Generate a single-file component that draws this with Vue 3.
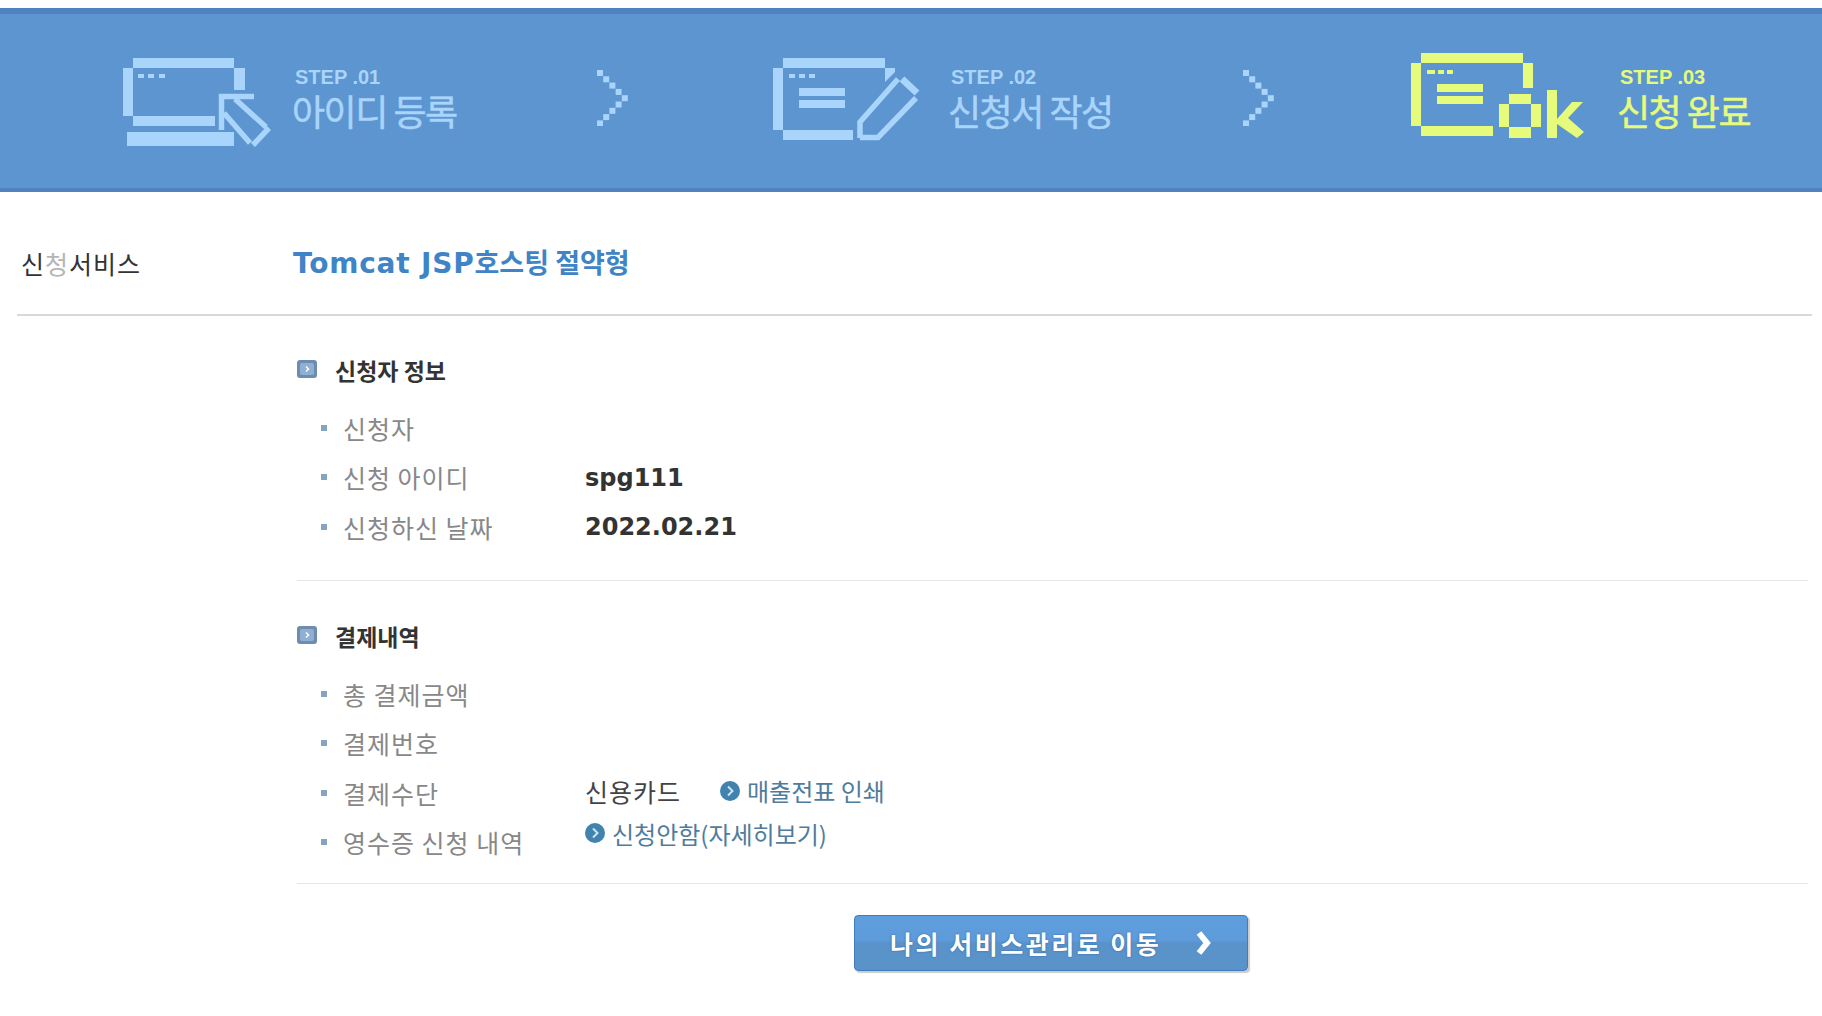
<script setup>
const chevron = Array.from({ length: 9 }, (_, n) => ({
  x: (4 - Math.abs(n - 4)) * 6.2,
  y: n * 6.3,
}))

const applicant = [
  { label: '신청자' },
  { label: '신청 아이디', value: 'spg111' },
  { label: '신청하신 날짜', value: '2022.02.21' },
]
</script>

<template>
  <div class="page">
    <div class="banner">
      <div class="step">
        <svg class="icon icon-one" width="150" height="90" viewBox="0 0 150 90">
          <g fill="#a9d4fb">
            <rect x="10" y="0" width="101" height="10" />
            <rect x="0" y="10" width="10" height="48" />
            <rect x="111" y="10" width="11" height="22" />
            <rect x="10" y="58" width="82" height="10" />
            <rect x="4" y="74" width="107" height="14" />
            <rect x="15" y="16" width="6" height="4" />
            <rect x="25" y="16" width="6" height="4" />
            <rect x="36" y="16" width="6" height="4" />
          </g>
          <path d="M98.500 72V38.500H131M112 41l31 28M101 55l26 30M146 70l-16 17" fill="none" stroke="#a9d4fb" stroke-width="5.500" />
        </svg>
        <div class="step-text text-one">
          <div class="step-no">STEP .01</div>
          <div class="step-name">아이디 등록</div>
        </div>
      </div>
      <svg class="chevron" width="32" height="56" viewBox="0 0 32 56">
        <rect v-for="(p, i) in chevron" :key="i" :x="p.x" :y="p.y" width="6" height="6" fill="#a9d4fb" />
      </svg>
      <div class="step">
        <svg class="icon icon-two" width="150" height="90" viewBox="0 0 150 90">
          <g fill="#a9d4fb">
            <rect x="10" y="0" width="102" height="10" />
            <rect x="0" y="10" width="10" height="62" />
            <polygon points="112,10 122,10 122,14 112,24" />
            <rect x="10" y="72" width="70" height="10" />
            <rect x="16" y="16" width="6" height="4" />
            <rect x="26" y="16" width="6" height="4" />
            <rect x="36" y="16" width="6" height="4" />
            <rect x="26" y="30" width="46" height="8" />
            <rect x="26" y="42" width="46" height="8" />
          </g>
          <path d="M87 80V64l38-43M143 40l-38 39.500H87" fill="none" stroke="#a9d4fb" stroke-width="5.500" />
          <path d="M129 21l15 14" stroke="#a9d4fb" stroke-width="7" />
        </svg>
        <div class="step-text text-two">
          <div class="step-no">STEP .02</div>
          <div class="step-name">신청서 작성</div>
        </div>
      </div>
      <svg class="chevron" width="32" height="56" viewBox="0 0 32 56">
        <rect v-for="(p, i) in chevron" :key="i" :x="p.x" :y="p.y" width="6" height="6" fill="#a9d4fb" />
      </svg>
      <div class="step step-done">
        <svg class="icon icon-three" width="175" height="88" viewBox="0 0 175 88">
          <g fill="#e6fb7c">
            <rect x="10" y="0" width="102" height="10" />
            <rect x="0" y="10" width="10" height="63" />
            <rect x="112" y="10" width="10" height="25" />
            <rect x="10" y="73" width="72" height="10" />
            <rect x="16" y="17" width="8" height="4" />
            <rect x="27" y="17" width="6" height="4" />
            <rect x="36" y="17" width="6" height="4" />
            <rect x="26" y="31" width="46" height="8" />
            <rect x="26" y="43" width="46" height="8" />
            <rect x="98" y="41" width="22" height="10" />
            <rect x="88" y="51" width="10" height="23" />
            <rect x="120" y="51" width="10" height="23" />
            <rect x="98" y="74" width="22" height="11" />
            <rect x="136" y="37" width="10" height="48" />
            <polygon points="146,66 161,49 172,49 157,65 173,79 166,85 146,71" />
          </g>
        </svg>
        <div class="step-text text-three">
          <div class="step-no">STEP .03</div>
          <div class="step-name">신청 완료</div>
        </div>
      </div>
    </div>

    <div class="content">
      <div class="service">
        <div class="service-label">신<span class="faded">청</span>서비스</div>
        <div class="service-name">Tomcat JSP<span class="service-kr">호스팅 절약형</span></div>
      </div>

      <div class="section">
        <div class="section-head">
          <svg class="head-icon" width="20" height="18" viewBox="0 0 20 18">
            <rect width="20" height="18" rx="3" fill="#6c8cb0" />
            <rect x="3" y="3" width="14" height="12" rx="2" fill="#8fb0d2" />
            <path d="M9 6.500l2.500 2.500L9 11.500" fill="none" stroke="#fff" stroke-width="1.500" />
          </svg>
          <span>신청자 정보</span>
        </div>
        <div v-for="row in applicant" :key="row.label" class="row">
          <i class="bullet"></i>
          <span class="label">{{ row.label }}</span>
          <b v-if="row.value" class="value">{{ row.value }}</b>
        </div>
      </div>

      <div class="section section-last">
        <div class="section-head">
          <svg class="head-icon" width="20" height="18" viewBox="0 0 20 18">
            <rect width="20" height="18" rx="3" fill="#6c8cb0" />
            <rect x="3" y="3" width="14" height="12" rx="2" fill="#8fb0d2" />
            <path d="M9 6.500l2.500 2.500L9 11.500" fill="none" stroke="#fff" stroke-width="1.500" />
          </svg>
          <span>결제내역</span>
        </div>
        <div class="row">
          <i class="bullet"></i>
          <span class="label">총 결제금액</span>
        </div>
        <div class="row">
          <i class="bullet"></i>
          <span class="label">결제번호</span>
        </div>
        <div class="row">
          <i class="bullet"></i>
          <span class="label">결제수단</span>
          <span class="pay">신용카드</span>
          <a class="link link-print">
            <svg width="20" height="20" viewBox="0 0 20 20">
              <circle cx="10" cy="10" r="10" fill="#3f83ae" />
              <path d="M8 5.500l4.500 4.500L8 14.500" fill="none" stroke="#cfe3f0" stroke-width="2" />
            </svg>
            매출전표 인쇄
          </a>
        </div>
        <div class="row">
          <i class="bullet"></i>
          <span class="label">영수증 신청 내역</span>
          <a class="link link-receipt">
            <svg width="20" height="20" viewBox="0 0 20 20">
              <circle cx="10" cy="10" r="10" fill="#3f83ae" />
              <path d="M8 5.500l4.500 4.500L8 14.500" fill="none" stroke="#cfe3f0" stroke-width="2" />
            </svg>
            신청안함(자세히보기)
          </a>
        </div>
      </div>

      <div class="actions">
        <button class="move-button">
          <span>나의 서비스관리로 이동</span>
          <svg width="16" height="26" viewBox="0 0 16 26">
            <path d="M3 3l8 10-8 10" fill="none" stroke="#fff" stroke-width="6" />
          </svg>
        </button>
      </div>
    </div>
  </div>
</template>

<style scoped>
.page {
  width: 1822px;
  height: 1016px;
  overflow: hidden;
  background: #fff;
  padding-top: 8px;
  box-sizing: border-box;
  font-family: "Noto Sans CJK KR", "Liberation Sans", sans-serif;
}

.banner {
  height: 184px;
  box-sizing: border-box;
  padding-left: 123px;
  background: #5c95cf;
  border-top: 6px solid #4f82bf;
  border-bottom: 4px solid #4f82bf;
  display: grid;
  grid-template-columns: 474px 176px 470px 168px 1fr;
}

.step {
  display: flex;
  align-items: flex-start;
}

.icon {
  flex: none;
  margin-top: 44px;
}

.icon-three {
  margin-top: 39px;
}

.step-text {
  margin-top: 53px;
  color: #a9d4fb;
}

.text-one {
  margin-left: 19px;
}

.text-two {
  margin-left: 25px;
}

.text-three {
  margin-left: 31px;
  color: #e6fb7c;
}

.step-no {
  font-family: "Liberation Sans", sans-serif;
  font-size: 20px;
  line-height: 20px;
  font-weight: bold;
  padding-left: 3px;
}

.step-name {
  font-size: 36px;
  line-height: 38px;
  letter-spacing: -1.500px;
  margin-top: 4px;
  -webkit-text-stroke: 0.500px currentColor;
}

.chevron {
  margin-top: 56px;
}

.content {
  padding: 0 10px 0 17px;
}

.service {
  height: 122px;
  display: flex;
  align-items: center;
  border-bottom: 2px solid #d9d9d9;
}

.service-label {
  width: 276px;
  padding-left: 4px;
  box-sizing: border-box;
  font-size: 25px;
  letter-spacing: 1px;
  color: #333;
  margin-top: 20px;
}

.faded {
  color: #b5b5b5;
}

.service-name {
  font-family: "DejaVu Sans", sans-serif;
  font-size: 28px;
  letter-spacing: 0.800px;
  font-weight: bold;
  color: #3f84c6;
  margin-top: 16px;
}

.service-kr {
  font-family: "Noto Sans CJK KR", sans-serif;
  font-size: 27px;
  letter-spacing: 0;
}

.section {
  margin: 0 4px 0 280px;
  padding-top: 34px;
  height: 230px;
  border-bottom: 1px solid #e6e6e6;
}

.section-last {
  padding-top: 35px;
  height: 267px;
}

.section-head {
  height: 40px;
  display: flex;
  align-items: center;
  gap: 18px;
  font-size: 23px;
  font-weight: bold;
  color: #333;
  margin-bottom: 13px;
}

.head-icon {
  margin-top: -2px;
}

.row {
  height: 49.500px;
  display: flex;
  align-items: center;
  padding-left: 24px;
  font-size: 25px;
  letter-spacing: 1px;
}

.bullet {
  width: 6px;
  height: 6px;
  background: #86a3c3;
  flex: none;
  margin-right: 16px;
}

.label {
  width: 242px;
  flex: none;
  color: #888;
}

.value {
  font-family: "DejaVu Sans", sans-serif;
  font-size: 24px;
  letter-spacing: 0;
  color: #333;
  margin-top: 1px;
}

.pay {
  color: #444;
  font-size: 25px;
  margin-top: -4px;
}

.link {
  display: flex;
  align-items: center;
  gap: 7px;
  color: #4f7c9c;
  font-size: 24px;
  letter-spacing: 0;
}

.link-print {
  margin-left: 39px;
  margin-top: -4px;
}

.link-receipt {
  margin-top: -18px;
}

.actions {
  display: flex;
  padding-left: 837px;
  padding-top: 31px;
}

.move-button {
  width: 394px;
  height: 56px;
  display: flex;
  align-items: center;
  justify-content: space-between;
  padding: 0 35px 0 35px;
  box-sizing: border-box;
  font-family: inherit;
  font-size: 25px;
  font-weight: bold;
  letter-spacing: 2.500px;
  color: #fff;
  text-shadow: 0 0 2px #2f6299;
  border: 1px solid #3f7dbd;
  border-radius: 4px;
  background: linear-gradient(#5f9ddd 0%, #5d9bdb 45%, #5a92ca 50%, #5a92ca 100%);
  box-shadow: 2px 2px 1px #ccc;
}
</style>
